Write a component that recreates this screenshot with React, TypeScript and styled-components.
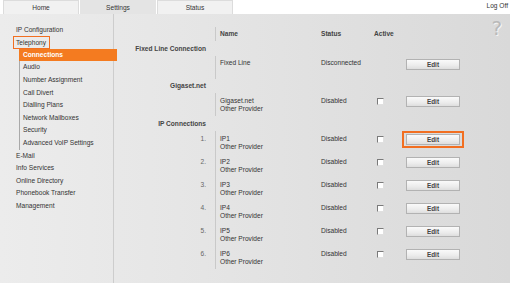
import React from "react";
import styled, { createGlobalStyle } from "styled-components";

const GlobalStyle = createGlobalStyle`
  html, body { margin: 0; padding: 0; background: #ffffff; }
  body { font-family: "Liberation Sans", Arial, sans-serif; color: #333; }
  * { box-sizing: border-box; }
`;

const Page = styled.div`
  width: 510px;
  height: 287px;
  display: flex;
  flex-direction: column;
  overflow: hidden;
`;

const TopBar = styled.div`
  height: 14px;
  display: flex;
  align-items: flex-start;
  padding-left: 3px;
`;

const Tab = styled.div<{ $active?: boolean }>`
  width: 76px;
  height: 14px;
  margin-right: 1px;
  display: flex;
  align-items: center;
  justify-content: center;
  font-size: 6.6px;
  color: #333;
  background: ${(p) => (p.$active ? "#e4e4e4" : "#f1f1f1")};
  border: 1px solid ${(p) => (p.$active ? "#e4e4e4" : "#dcdcdc")};
  border-bottom: none;
`;

const LogOff = styled.div`
  margin-left: auto;
  padding-right: 2px;
  font-size: 6.6px;
  line-height: 11px;
  color: #333;
`;

const Panel = styled.div`
  height: 269px;
  display: flex;
  background: linear-gradient(to right, #ececec 0%, #e6e6e6 35%, #d9d9d9 100%);
`;

const Sidebar = styled.nav`
  width: 114px;
  flex: none;
  border-right: 1px solid #cdcdcd;
  padding-top: 9.7px;
  font-size: 6.6px;
`;

const MenuItem = styled.div`
  height: 12.6px;
  line-height: 12.6px;
  padding-left: 16px;
  color: #333;
  white-space: nowrap;
`;

const Highlight = styled.span`
  display: inline-block;
  line-height: 11px;
  margin-left: -3px;
  padding: 0 3px 0 2px;
  border: 1.5px solid #f26f21;
`;

const SubMenu = styled.div`
  margin-left: 19px;
  border-left: 1px solid #a9a9a9;
`;

const SubItem = styled.div<{ $selected?: boolean }>`
  position: relative;
  z-index: 1;
  height: 12.6px;
  line-height: 12.6px;
  white-space: nowrap;
  padding-left: ${(p) => (p.$selected ? "4px" : "3px")};
  margin-left: ${(p) => (p.$selected ? "-1px" : "0")};
  margin-right: ${(p) => (p.$selected ? "-4px" : "0")};
  background: ${(p) => (p.$selected ? "#f47b20" : "transparent")};
  color: ${(p) => (p.$selected ? "#ffffff" : "#333")};
  font-weight: ${(p) => (p.$selected ? "bold" : "normal")};
`;

const Content = styled.main`
  position: relative;
  flex: 1;
  padding-top: 13px;
  font-size: 6.6px;
`;

const HelpMark = styled.div`
  position: absolute;
  top: 4px;
  right: 8px;
  font-size: 20px;
  line-height: 20px;
  color: #b9b9b9;
  text-shadow: 1px 1px 0 #f4f4f4;
  font-family: "DejaVu Sans", "Liberation Sans", sans-serif;
`;

const Row = styled.div<{ $h: number }>`
  display: grid;
  grid-template-columns: 101px 106px 53px 32px 54px;
  height: ${(p) => p.$h}px;
`;

const LabelCell = styled.div<{ $bold?: boolean; $pt: number }>`
  text-align: right;
  padding-right: 9px;
  padding-top: ${(p) => p.$pt}px;
  line-height: 8px;
  font-weight: ${(p) => (p.$bold ? "bold" : "normal")};
  color: ${(p) => (p.$bold ? "#444" : "#666")};
  white-space: nowrap;
`;

const NameCell = styled.div<{ $line?: boolean; $bold?: boolean; $pt: number }>`
  border-left: 1px solid ${(p) => (p.$line ? "#c9c9c9" : "transparent")};
  padding-left: 4px;
  padding-top: ${(p) => p.$pt}px;
  line-height: 8px;
  font-weight: ${(p) => (p.$bold ? "bold" : "normal")};
  color: ${(p) => (p.$bold ? "#444" : "#333")};
  white-space: nowrap;
`;

const TextCell = styled.div<{ $bold?: boolean; $pt: number }>`
  padding-top: ${(p) => p.$pt}px;
  line-height: 8px;
  font-weight: ${(p) => (p.$bold ? "bold" : "normal")};
  color: ${(p) => (p.$bold ? "#444" : "#333")};
  white-space: nowrap;
`;

const CheckCell = styled.div`
  padding-left: 3px;
  padding-top: 5px;
`;

const CheckBox = styled.span`
  display: block;
  width: 7px;
  height: 7px;
  background: #ffffff;
  border: 1px solid;
  border-color: #7a7a7a #e0e0e0 #e0e0e0 #7a7a7a;
`;

const EditButton = styled.div<{ $focus?: boolean }>`
  position: relative;
  margin-top: 3px;
  height: 11px;
  display: flex;
  align-items: center;
  justify-content: center;
  font-size: 6.4px;
  font-weight: bold;
  color: #444;
  background: linear-gradient(to bottom, #fafafa 0%, #ececec 60%, #dedede 100%);
  border: 1px solid #b2b2b2;
  &::after {
    content: "";
    display: ${(p) => (p.$focus ? "block" : "none")};
    position: absolute;
    top: -4px;
    bottom: -4px;
    left: -5px;
    right: -5px;
    border: 2px solid #f26f21;
  }
`;

type Conn = { label: string; name: string; sub?: string; status: string; check: boolean; focus?: boolean };

const ipRows: Conn[] = [1, 2, 3, 4, 5, 6].map((n) => ({
  label: `${n}.`,
  name: `IP${n}`,
  sub: "Other Provider",
  status: "Disabled",
  check: true,
  focus: n === 1,
}));

function SectionRow({ title, h }: { title: string; h: number }) {
  return (
    <Row $h={h}>
      <LabelCell $bold $pt={(h - 8) / 2}>{title}</LabelCell>
      <NameCell $pt={0} />
    </Row>
  );
}

function ConnRow({ c, pt }: { c: Conn; pt: number }) {
  return (
    <Row $h={23}>
      <LabelCell $pt={pt}>{c.label}</LabelCell>
      <NameCell $line $pt={pt}>
        {c.name}
        {c.sub && <br />}
        {c.sub}
      </NameCell>
      <TextCell $pt={pt}>{c.status}</TextCell>
      <CheckCell>{c.check && <CheckBox />}</CheckCell>
      <div>
        <EditButton $focus={c.focus}>Edit</EditButton>
      </div>
    </Row>
  );
}

export default function App() {
  return (
    <>
      <GlobalStyle />
      <Page>
        <TopBar>
          <Tab>Home</Tab>
          <Tab $active>Settings</Tab>
          <Tab>Status</Tab>
          <LogOff>Log Off</LogOff>
        </TopBar>
        <Panel>
          <Sidebar>
            <MenuItem>IP Configuration</MenuItem>
            <MenuItem>
              <Highlight>Telephony</Highlight>
            </MenuItem>
            <SubMenu>
              <SubItem $selected>Connections</SubItem>
              <SubItem>Audio</SubItem>
              <SubItem>Number Assignment</SubItem>
              <SubItem>Call Divert</SubItem>
              <SubItem>Dialling Plans</SubItem>
              <SubItem>Network Mailboxes</SubItem>
              <SubItem>Security</SubItem>
              <SubItem>Advanced VoIP Settings</SubItem>
            </SubMenu>
            <MenuItem>E-Mail</MenuItem>
            <MenuItem>Info Services</MenuItem>
            <MenuItem>Online Directory</MenuItem>
            <MenuItem>Phonebook Transfer</MenuItem>
            <MenuItem>Management</MenuItem>
          </Sidebar>
          <Content>
            <HelpMark>?</HelpMark>
            <Row $h={14}>
              <LabelCell $pt={3} />
              <NameCell $line $bold $pt={3}>Name</NameCell>
              <TextCell $bold $pt={3}>Status</TextCell>
              <TextCell $bold $pt={3}>Active</TextCell>
            </Row>
            <SectionRow title="Fixed Line Connection" h={15} />
            <ConnRow pt={3} c={{ label: "", name: "Fixed Line", status: "Disconnected", check: false }} />
            <SectionRow title="Gigaset.net" h={14} />
            <ConnRow pt={4} c={{ label: "", name: "Gigaset.net", sub: "Other Provider", status: "Disabled", check: true }} />
            <SectionRow title="IP Connections" h={15} />
            {ipRows.map((c) => (
              <ConnRow key={c.name} pt={4} c={c} />
            ))}
          </Content>
        </Panel>
      </Page>
    </>
  );
}
